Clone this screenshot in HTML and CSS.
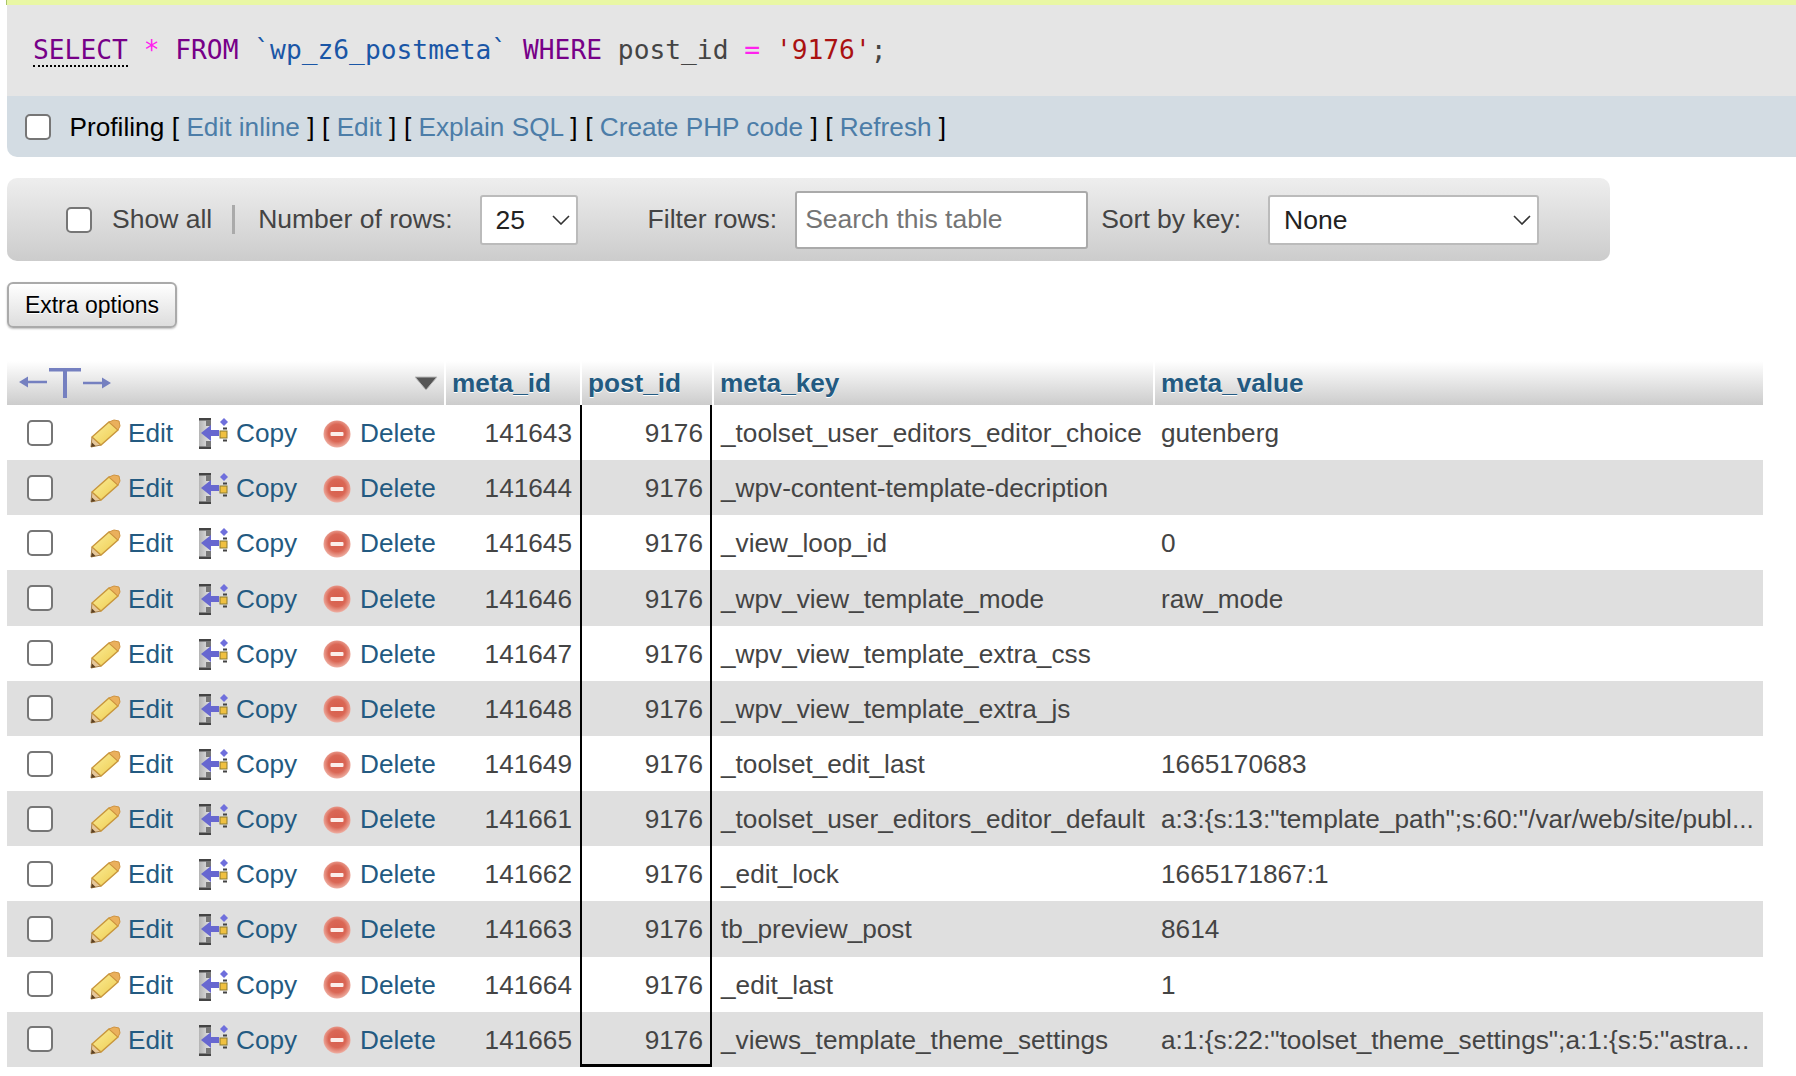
FILE: index.html
```html
<!DOCTYPE html>
<html lang="en">
<head>
    <meta charset="UTF-8">
    <meta name="viewport" content="width=device-width, initial-scale=1.0">
    <title>wp_z6_postmeta</title>
    <link rel="stylesheet" href="styles.css">
</head>
<body>
    <svg class="icon-defs" width="0" height="0">
        <defs>
            <radialGradient id="del-fill" cx="50%" cy="46%" r="52%">
                <stop offset="0" stop-color="#d65d4c"/>
                <stop offset="0.62" stop-color="#da6755"/>
                <stop offset="1" stop-color="#eda99c"/>
            </radialGradient>
            <linearGradient id="copy-col" x1="0" y1="0" x2="1" y2="0">
                <stop offset="0" stop-color="#b4b4b4"/>
                <stop offset="1" stop-color="#e8e8e8"/>
            </linearGradient>
            <linearGradient id="pencil-body" x1="0" y1="0" x2="1" y2="1">
                <stop offset="0" stop-color="#fbee9a"/>
                <stop offset="1" stop-color="#eecb4e"/>
            </linearGradient>
        </defs>
        <symbol id="ic-edit" viewBox="0 0 31 29">
            <polygon points="1,28 2,18 11,26" fill="#e6c79a" stroke="#a9824c"/>
            <polygon points="1,28 2,23.5 5.5,27" fill="#5b4022"/>
            <polygon points="2,18 19,3 28,11 11,26" fill="url(#pencil-body)" stroke="#c8963c" stroke-width="1.4"/>
            <polygon points="19,3 24,1 29,2 30,7 28,11" fill="#eab05c" stroke="#cf9340"/>
        </symbol>
        <symbol id="ic-copy" viewBox="0 0 29 31">
            <rect x="0" y="0" width="12" height="31" fill="url(#copy-col)"/>
            <rect x="0" y="0" width="12" height="2.5" fill="#444"/>
            <rect x="0" y="28.5" width="12" height="2.5" fill="#444"/>
            <rect x="7" y="2" width="5" height="6" fill="#777"/>
            <rect x="7" y="23" width="5" height="6" fill="#777"/>
            <polygon points="2,15 12,7 12,12 20,12 20,18 12,18 12,23" fill="#6767d0"/>
            <polygon points="25,0 29,4 25,8 21,4" fill="#6f6fdc"/>
            <rect x="24" y="9.5" width="4" height="2" fill="#444"/>
            <rect x="21" y="13" width="7" height="7" fill="#f0c040" stroke="#8a7a30"/>
            <rect x="24" y="21.5" width="4" height="2" fill="#444"/>
        </symbol>
        <symbol id="ic-delete" viewBox="0 0 28 28">
            <circle cx="14" cy="14" r="13.5" fill="url(#del-fill)"/>
            <rect x="7.5" y="12" width="13" height="4" rx="1" fill="#fbeeea"/>
        </symbol>
    </svg>

    <div class="page">
        <div class="notice-line"></div>
        <div class="sql-box">
            <code><span class="kw sql-doc">SELECT</span> <span class="op">*</span> <span class="kw">FROM</span> <span class="tbl">`wp_z6_postmeta`</span> <span class="kw">WHERE</span> <span class="plain">post_id</span> <span class="op">=</span> <span class="str">'9176'</span><span class="plain">;</span></code>
        </div>
        <div class="sql-tools">
            <input type="checkbox" class="check">
            <span class="tool-label">Profiling</span>
            <span>[ <a href="#">Edit inline</a> ]</span>
            <span>[ <a href="#">Edit</a> ]</span>
            <span>[ <a href="#">Explain SQL</a> ]</span>
            <span>[ <a href="#">Create PHP code</a> ]</span>
            <span>[ <a href="#">Refresh</a> ]</span>
        </div>

        <div class="nav-bar">
            <input type="checkbox" class="check show-all">
            <span class="show-label">Show all</span>
            <span class="nav-sep"></span>
            <span class="rows-label">Number of rows:</span>
            <select class="pick pick-rows"><option>25</option></select>
            <span class="filter-label">Filter rows:</span>
            <input type="text" class="search" placeholder="Search this table">
            <span class="sort-label">Sort by key:</span>
            <select class="pick pick-sort"><option>None</option></select>
        </div>

        <button class="extra">Extra options</button>

        <table class="results">
            <colgroup>
                <col class="c-check"><col class="c-edit"><col class="c-copy"><col class="c-del">
                <col class="c-id"><col class="c-post"><col class="c-key"><col class="c-value">
            </colgroup>
            <thead>
                <tr>
                    <th colspan="4" class="th-actions">
                        <div class="th-actions-in">
                            <svg class="resize-ic" width="92" height="32" viewBox="0 0 92 32">
                                <path d="M0 15 L9 9.5 V13.7 H28 V16.3 H9 V20.5 Z" fill="#7580c0"/>
                                <path d="M30 1 H62 V4.5 H48 V31 H44 V4.5 H30 Z" fill="#7580c0"/>
                                <path d="M92 16 L83 10.5 V14.7 H64 V17.3 H83 V21.5 Z" fill="#7580c0"/>
                            </svg>
                            <svg class="sort-ic" width="24" height="15" viewBox="0 0 24 15">
                                <polygon points="1,1 23,1 12,14" fill="#555" stroke="#bbb"/>
                            </svg>
                        </div>
                    </th>
                    <th>meta_id</th>
                    <th>post_id</th>
                    <th>meta_key</th>
                    <th>meta_value</th>
                </tr>
            </thead>
            <tbody>
                <tr>
                    <td class="td-check"><input type="checkbox" class="check"></td>
                    <td><a class="act" href="#"><svg class="ic-e"><use href="#ic-edit"/></svg>Edit</a></td>
                    <td><a class="act" href="#"><svg class="ic-c"><use href="#ic-copy"/></svg>Copy</a></td>
                    <td><a class="act" href="#"><svg class="ic-d"><use href="#ic-delete"/></svg>Delete</a></td>
                    <td class="num">141643</td><td class="num post">9176</td><td>_toolset_user_editors_editor_choice</td><td>gutenberg</td>
                </tr>
                <tr>
                    <td class="td-check"><input type="checkbox" class="check"></td>
                    <td><a class="act" href="#"><svg class="ic-e"><use href="#ic-edit"/></svg>Edit</a></td>
                    <td><a class="act" href="#"><svg class="ic-c"><use href="#ic-copy"/></svg>Copy</a></td>
                    <td><a class="act" href="#"><svg class="ic-d"><use href="#ic-delete"/></svg>Delete</a></td>
                    <td class="num">141644</td><td class="num post">9176</td><td>_wpv-content-template-decription</td><td></td>
                </tr>
                <tr>
                    <td class="td-check"><input type="checkbox" class="check"></td>
                    <td><a class="act" href="#"><svg class="ic-e"><use href="#ic-edit"/></svg>Edit</a></td>
                    <td><a class="act" href="#"><svg class="ic-c"><use href="#ic-copy"/></svg>Copy</a></td>
                    <td><a class="act" href="#"><svg class="ic-d"><use href="#ic-delete"/></svg>Delete</a></td>
                    <td class="num">141645</td><td class="num post">9176</td><td>_view_loop_id</td><td>0</td>
                </tr>
                <tr>
                    <td class="td-check"><input type="checkbox" class="check"></td>
                    <td><a class="act" href="#"><svg class="ic-e"><use href="#ic-edit"/></svg>Edit</a></td>
                    <td><a class="act" href="#"><svg class="ic-c"><use href="#ic-copy"/></svg>Copy</a></td>
                    <td><a class="act" href="#"><svg class="ic-d"><use href="#ic-delete"/></svg>Delete</a></td>
                    <td class="num">141646</td><td class="num post">9176</td><td>_wpv_view_template_mode</td><td>raw_mode</td>
                </tr>
                <tr>
                    <td class="td-check"><input type="checkbox" class="check"></td>
                    <td><a class="act" href="#"><svg class="ic-e"><use href="#ic-edit"/></svg>Edit</a></td>
                    <td><a class="act" href="#"><svg class="ic-c"><use href="#ic-copy"/></svg>Copy</a></td>
                    <td><a class="act" href="#"><svg class="ic-d"><use href="#ic-delete"/></svg>Delete</a></td>
                    <td class="num">141647</td><td class="num post">9176</td><td>_wpv_view_template_extra_css</td><td></td>
                </tr>
                <tr>
                    <td class="td-check"><input type="checkbox" class="check"></td>
                    <td><a class="act" href="#"><svg class="ic-e"><use href="#ic-edit"/></svg>Edit</a></td>
                    <td><a class="act" href="#"><svg class="ic-c"><use href="#ic-copy"/></svg>Copy</a></td>
                    <td><a class="act" href="#"><svg class="ic-d"><use href="#ic-delete"/></svg>Delete</a></td>
                    <td class="num">141648</td><td class="num post">9176</td><td>_wpv_view_template_extra_js</td><td></td>
                </tr>
                <tr>
                    <td class="td-check"><input type="checkbox" class="check"></td>
                    <td><a class="act" href="#"><svg class="ic-e"><use href="#ic-edit"/></svg>Edit</a></td>
                    <td><a class="act" href="#"><svg class="ic-c"><use href="#ic-copy"/></svg>Copy</a></td>
                    <td><a class="act" href="#"><svg class="ic-d"><use href="#ic-delete"/></svg>Delete</a></td>
                    <td class="num">141649</td><td class="num post">9176</td><td>_toolset_edit_last</td><td>1665170683</td>
                </tr>
                <tr>
                    <td class="td-check"><input type="checkbox" class="check"></td>
                    <td><a class="act" href="#"><svg class="ic-e"><use href="#ic-edit"/></svg>Edit</a></td>
                    <td><a class="act" href="#"><svg class="ic-c"><use href="#ic-copy"/></svg>Copy</a></td>
                    <td><a class="act" href="#"><svg class="ic-d"><use href="#ic-delete"/></svg>Delete</a></td>
                    <td class="num">141661</td><td class="num post">9176</td><td>_toolset_user_editors_editor_default</td><td>a:3:{s:13:"template_path";s:60:"/var/web/site/publ...</td>
                </tr>
                <tr>
                    <td class="td-check"><input type="checkbox" class="check"></td>
                    <td><a class="act" href="#"><svg class="ic-e"><use href="#ic-edit"/></svg>Edit</a></td>
                    <td><a class="act" href="#"><svg class="ic-c"><use href="#ic-copy"/></svg>Copy</a></td>
                    <td><a class="act" href="#"><svg class="ic-d"><use href="#ic-delete"/></svg>Delete</a></td>
                    <td class="num">141662</td><td class="num post">9176</td><td>_edit_lock</td><td>1665171867:1</td>
                </tr>
                <tr>
                    <td class="td-check"><input type="checkbox" class="check"></td>
                    <td><a class="act" href="#"><svg class="ic-e"><use href="#ic-edit"/></svg>Edit</a></td>
                    <td><a class="act" href="#"><svg class="ic-c"><use href="#ic-copy"/></svg>Copy</a></td>
                    <td><a class="act" href="#"><svg class="ic-d"><use href="#ic-delete"/></svg>Delete</a></td>
                    <td class="num">141663</td><td class="num post">9176</td><td>tb_preview_post</td><td>8614</td>
                </tr>
                <tr>
                    <td class="td-check"><input type="checkbox" class="check"></td>
                    <td><a class="act" href="#"><svg class="ic-e"><use href="#ic-edit"/></svg>Edit</a></td>
                    <td><a class="act" href="#"><svg class="ic-c"><use href="#ic-copy"/></svg>Copy</a></td>
                    <td><a class="act" href="#"><svg class="ic-d"><use href="#ic-delete"/></svg>Delete</a></td>
                    <td class="num">141664</td><td class="num post">9176</td><td>_edit_last</td><td>1</td>
                </tr>
                <tr>
                    <td class="td-check"><input type="checkbox" class="check"></td>
                    <td><a class="act" href="#"><svg class="ic-e"><use href="#ic-edit"/></svg>Edit</a></td>
                    <td><a class="act" href="#"><svg class="ic-c"><use href="#ic-copy"/></svg>Copy</a></td>
                    <td><a class="act" href="#"><svg class="ic-d"><use href="#ic-delete"/></svg>Delete</a></td>
                    <td class="num">141665</td><td class="num post last">9176</td><td>_views_template_theme_settings</td><td>a:1:{s:22:"toolset_theme_settings";a:1:{s:5:"astra...</td>
                </tr>
            </tbody>
        </table>
    </div>
</body>
</html>
```

FILE: styles.css
```css
* { box-sizing: border-box; }
html, body { margin: 0; padding: 0; background: #fff; }
body {
    font-family: "Liberation Sans", Arial, sans-serif;
    font-size: 26.2px;
    color: #444;
    overflow: hidden;
}
a { color: #235a81; text-decoration: none; }
.icon-defs { display: block; }
.page { padding-left: 7px; }

.check {
    appearance: none;
    width: 26px;
    height: 26px;
    margin: 0;
    flex: none;
    display: block;
    background: #fff;
    border: 2px solid #767676;
    border-radius: 5px;
}

/* sql box */
.notice-line { height: 5px; background: #e9f7a4; border-left: 1px solid #a9c46a; margin-left: -1px; }
.sql-box {
    height: 91px;
    padding: 0 0 2px 26px;
    background: #e5e5e5;
    display: flex;
    align-items: center;
}
.sql-box code { font-family: "DejaVu Sans Mono", monospace; font-size: 26.25px; line-height: 36px; }
.kw { color: #770088; }
.sql-doc { border-bottom: 2px dotted #000; }
.op { color: #ff22ee; }
.tbl { color: #1a56a6; }
.plain { color: #444; }
.str { color: #aa1111; }

.sql-tools {
    height: 61px;
    padding: 1px 0 0 18px;
    display: flex;
    align-items: center;
    gap: 7.6px;
    background: #d3dce3;
    border-bottom-left-radius: 10px;
    color: #000;
}
.sql-tools a { color: #4c7da8; }
.sql-tools .check { margin-top: -1px; }
.tool-label { margin-left: 11px; }

/* navigation bar */
.nav-bar {
    width: 1603px;
    height: 83px;
    margin-top: 21px;
    display: flex;
    align-items: center;
    font-size: 26.5px;
    background: linear-gradient(#eeeeee, #cccccc);
    border-radius: 10px;
}
.show-all { margin-left: 59px; }
.show-label { margin-left: 20px; }
.nav-sep { width: 3px; height: 29px; margin: 0 23px 0 20px; background: #aaa; }
.pick {
    appearance: none;
    height: 50px;
    padding: 0 0 0 14px;
    font: inherit;
    color: #222;
    border: 2px solid #bbb;
    border-radius: 3px;
    background: #fff url("data:image/svg+xml,%3Csvg xmlns='http://www.w3.org/2000/svg' width='18' height='10'%3E%3Cpath d='M1 1 L9 9 L17 1' fill='none' stroke='%23333' stroke-width='1.6'/%3E%3C/svg%3E") no-repeat right 6px center;
}
.pick-rows { width: 98px; margin-left: 27px; }
.filter-label { margin-left: 70px; }
.search {
    width: 293px;
    height: 58px;
    margin-left: 18px;
    padding: 0 8px;
    font: inherit;
    color: #222;
    background: #fff;
    border: 2px solid #aaa;
    border-radius: 3px;
}
.search::placeholder { color: #757575; opacity: 1; }
.sort-label { margin-left: 13px; }
.pick-sort { width: 271px; margin-left: 27px; }

.extra {
    display: block;
    width: 170px;
    height: 46px;
    margin-top: 21px;
    padding: 0;
    font: inherit;
    font-size: 23px;
    color: #000;
    text-shadow: 0 1px 0 #fff;
    background: linear-gradient(#ffffff, #dddddd);
    border: 2px solid #aaa;
    border-radius: 6px;
    box-shadow: 0 1px 2px rgba(0,0,0,0.25);
}

/* results table */
.results {
    width: 1756px;
    margin-top: 33px;
    table-layout: fixed;
    border-collapse: separate;
    border-spacing: 0;
}
.c-check { width: 73px; }
.c-edit { width: 110px; }
.c-copy { width: 125px; }
.c-del { width: 129px; }
.c-id { width: 136px; }
.c-post { width: 132px; }
.c-key { width: 441px; }
.c-value { width: 610px; }

.results th {
    height: 44px;
    padding: 0 6px;
    text-align: left;
    font-weight: bold;
    color: #235a81;
    text-shadow: 0 1px 0 #fff;
    background: linear-gradient(#ffffff, #cccccc);
    border-left: 2px solid #fff;
}
.results th:first-child { border-left: 0; }
.results .th-actions { padding: 0 6px 0 12px; }
.th-actions-in { display: flex; align-items: center; justify-content: space-between; }

.results td {
    height: 55.17px;
    padding: 2px 9px 0;
    white-space: nowrap;
    overflow: hidden;
    color: #444;
}
.results tbody tr:nth-child(even) td { background: #dfdfdf; }
.results .td-check { padding: 0 0 0 20px; }
.results td.num { text-align: right; padding-right: 8px; }
.results td.post { padding-right: 7px; border-left: 2px solid #000; border-right: 2px solid #000; }
.results td.last { box-shadow: inset 0 -3px 0 #000; }

.results td:nth-child(2) { padding-left: 10px; padding-right: 0; }
.results td:nth-child(3) { padding-left: 9px; padding-right: 0; }
.results td:nth-child(4) { padding-left: 8px; padding-right: 0; }
.results td:nth-child(8) { padding-left: 8px; }
.act { display: flex; align-items: center; }
.ic-e { width: 31px; height: 29px; margin-right: 7px; }
.ic-c { width: 29px; height: 31px; margin-right: 8px; }
.ic-d { width: 28px; height: 28px; margin-right: 9px; }
```
